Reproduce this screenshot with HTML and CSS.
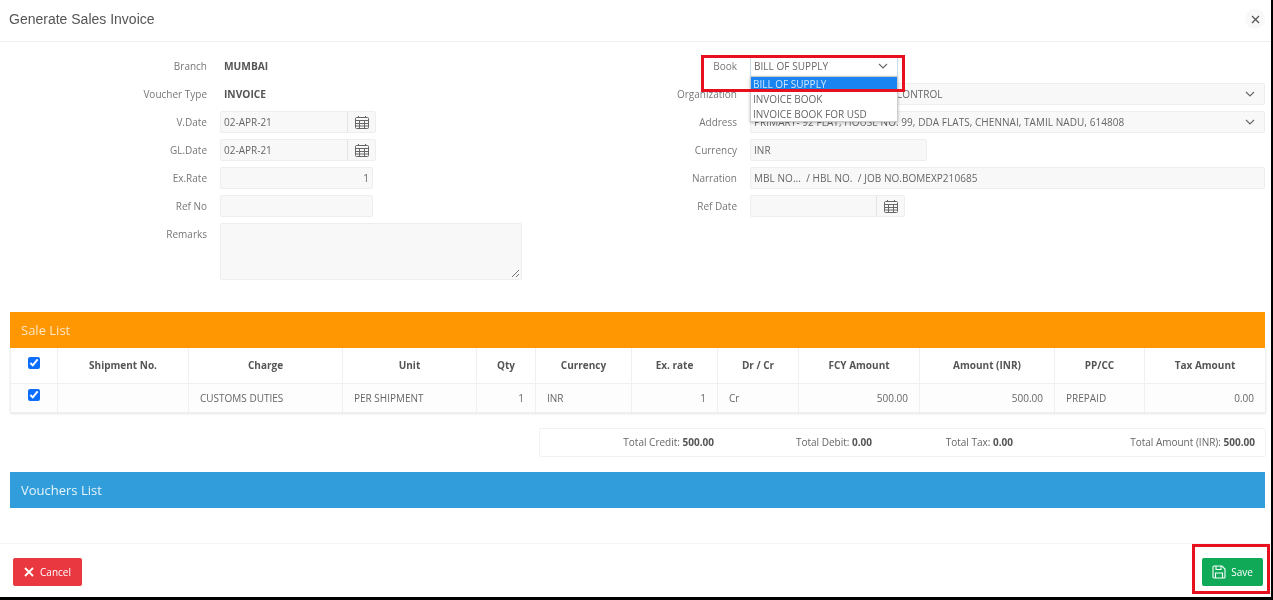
FILE: index.html
```html
<!DOCTYPE html>
<html lang="en">
<head>
    <meta charset="UTF-8">
    <title>Generate Sales Invoice</title>
    <link rel="stylesheet" href="styles.css">
</head>
<body>
    <div class="modal">
        <div class="modal-header">
            <h1>Generate Sales Invoice</h1>
            <button class="close" aria-label="Close">
                <svg width="9" height="9" viewBox="0 0 9 9"><path d="M1 1l7 7M8 1L1 8" stroke="#555" stroke-width="1.3" fill="none"/></svg>
            </button>
        </div>

        <div class="modal-body">
            <div class="form">
                <div class="form-col left">
                    <div class="row"><label>Branch</label><b class="value">MUMBAI</b></div>
                    <div class="row"><label>Voucher Type</label><b class="value">INVOICE</b></div>
                    <div class="row">
                        <label>V.Date</label>
                        <div class="field date">
                            <span class="text">02-APR-21</span>
                            <span class="cal"><svg width="14" height="13" viewBox="0 0 14 13"><path d="M3.5 0v2M10.5 0v2M1.5 1.5h11a1 1 0 0 1 1 1v9a1 1 0 0 1-1 1h-11a1 1 0 0 1-1-1v-9a1 1 0 0 1 1-1zM.5 4.5h13M.5 7.5h13M.5 10h13M4.500 4.500v8M9.500 4.500v8" stroke="#666" fill="none"/></svg></span>
                        </div>
                    </div>
                    <div class="row">
                        <label>GL.Date</label>
                        <div class="field date">
                            <span class="text">02-APR-21</span>
                            <span class="cal"><svg width="14" height="13" viewBox="0 0 14 13"><path d="M3.500 0v2M10.500 0v2M1.500 1.500h11a1 1 0 0 1 1 1v9a1 1 0 0 1-1 1h-11a1 1 0 0 1-1-1v-9a1 1 0 0 1 1-1zM.5 4.500h13M.5 7.500h13M.5 10h13M4.500 4.500v8M9.500 4.500v8" stroke="#666" fill="none"/></svg></span>
                        </div>
                    </div>
                    <div class="row"><label>Ex.Rate</label><div class="field short right"><span class="text">1</span></div></div>
                    <div class="row"><label>Ref No</label><div class="field short"></div></div>
                    <div class="row remarks-row">
                        <label>Remarks</label>
                        <div class="field remarks">
                            <svg class="grip" width="9" height="9" viewBox="0 0 9 9"><path d="M8 1L1 8M8 5L5 8" stroke="#777" fill="none"/></svg>
                        </div>
                    </div>
                </div>

                <div class="form-col right-col">
                    <div class="row book-row">
                        <label>Book</label>
                        <div class="field book">
                            <span class="text">BILL OF SUPPLY</span>
                            <svg class="chev" width="10" height="6" viewBox="0 0 10 6"><path d="M1 1l4 4 4-4" stroke="#666" stroke-width="1.1" fill="none"/></svg>
                            <div class="dropdown">
                                <div class="option selected">BILL OF SUPPLY</div>
                                <div class="option">INVOICE BOOK</div>
                                <div class="option">INVOICE BOOK FOR USD</div>
                            </div>
                        </div>
                        <div class="red-box book-box"></div>
                    </div>
                    <div class="row">
                        <label>Organization</label>
                        <div class="field wide">
                            <span class="text org-text">CONTROL</span>
                            <svg class="chev" width="10" height="6" viewBox="0 0 10 6"><path d="M1 1l4 4 4-4" stroke="#666" stroke-width="1.1" fill="none"/></svg>
                        </div>
                    </div>
                    <div class="row">
                        <label>Address</label>
                        <div class="field wide">
                            <span class="text">PRIMARY- 92 FLAT, HOUSE NO: 99, DDA FLATS, CHENNAI, TAMIL NADU, 614808</span>
                            <svg class="chev" width="10" height="6" viewBox="0 0 10 6"><path d="M1 1l4 4 4-4" stroke="#666" stroke-width="1.1" fill="none"/></svg>
                        </div>
                    </div>
                    <div class="row"><label>Currency</label><div class="field currency"><span class="text">INR</span></div></div>
                    <div class="row"><label>Narration</label><div class="field wide"><span class="text">MBL NO...  / HBL NO.  / JOB NO.BOMEXP210685</span></div></div>
                    <div class="row">
                        <label>Ref Date</label>
                        <div class="field ref-date">
                            <span class="text"></span>
                            <span class="cal"><svg width="14" height="13" viewBox="0 0 14 13"><path d="M3.500 0v2M10.500 0v2M1.500 1.500h11a1 1 0 0 1 1 1v9a1 1 0 0 1-1 1h-11a1 1 0 0 1-1-1v-9a1 1 0 0 1 1-1zM.5 4.500h13M.5 7.500h13M.5 10h13M4.500 4.500v8M9.500 4.500v8" stroke="#666" fill="none"/></svg></span>
                        </div>
                    </div>
                </div>
            </div>

            <div class="bar orange">Sale List</div>
            <table class="sale-table">
                <colgroup>
                    <col class="c-check"><col class="c-ship"><col class="c-charge"><col class="c-unit">
                    <col class="c-qty"><col class="c-cur"><col class="c-rate"><col class="c-drcr">
                    <col class="c-fcy"><col class="c-amt"><col class="c-pp"><col class="c-tax">
                </colgroup>
                <thead>
                    <tr>
                        <th><input type="checkbox" checked></th>
                        <th>Shipment No.</th>
                        <th>Charge</th>
                        <th>Unit</th>
                        <th>Qty</th>
                        <th>Currency</th>
                        <th>Ex. rate</th>
                        <th>Dr / Cr</th>
                        <th>FCY Amount</th>
                        <th>Amount (INR)</th>
                        <th>PP/CC</th>
                        <th>Tax Amount</th>
                    </tr>
                </thead>
                <tbody>
                    <tr>
                        <td class="center"><input type="checkbox" checked></td>
                        <td></td>
                        <td>CUSTOMS DUTIES</td>
                        <td>PER SHIPMENT</td>
                        <td class="num">1</td>
                        <td>INR</td>
                        <td class="num">1</td>
                        <td>Cr</td>
                        <td class="num">500.00</td>
                        <td class="num">500.00</td>
                        <td>PREPAID</td>
                        <td class="num">0.00</td>
                    </tr>
                </tbody>
            </table>

            <div class="totals">
                <div>Total Credit: <b>500.00</b></div>
                <div>Total Debit: <b>0.00</b></div>
                <div>Total Tax: <b>0.00</b></div>
                <div>Total Amount (INR): <b>500.00</b></div>
            </div>

            <div class="bar blue">Vouchers List</div>
        </div>

        <div class="modal-footer">
            <button class="btn cancel">
                <svg width="10" height="10" viewBox="0 0 10 10"><path d="M1 1l8 8M9 1L1 9" stroke="#fff" stroke-width="1.8" fill="none"/></svg>
                Cancel
            </button>
            <button class="btn save">
                <svg width="14" height="14" viewBox="0 0 14 14"><path d="M2 1h8l3 3v8a1 1 0 0 1-1 1H2a1 1 0 0 1-1-1V2a1 1 0 0 1 1-1zM4 1v3.500h5V1M3.500 13V8h7v5" stroke="#fff" stroke-width="1.1" fill="none"/></svg>
                Save
            </button>
            <div class="red-box save-box"></div>
        </div>
    </div>
</body>
</html>
```

FILE: styles.css
```css
* {
    box-sizing: border-box;
}

body {
    margin: 0;
    height: 600px;
    overflow: hidden;
    background-color: #000;
    font-family: "Open Sans", sans-serif;
    font-size: 10px;
    color: #666;
}

/* the reference is a soft, scaled up capture */
.modal {
    width: 1271px;
    height: 597px;
    background-color: #fff;
    display: flex;
    flex-direction: column;
    filter: blur(0.4px);
}

.modal-header {
    height: 42px;
    padding: 0 6px 3px 9px;
    border-bottom: 1px solid #eee;
    display: flex;
    align-items: center;
    justify-content: space-between;
}

.modal-header h1 {
    margin: 0;
    font-family: "Liberation Sans", sans-serif;
    font-size: 14px;
    font-weight: normal;
    color: #555;
}

.close {
    width: 20px;
    height: 20px;
    padding: 0;
    border: none;
    border-radius: 50%;
    background-color: #f8f8f8;
    display: flex;
    align-items: center;
    justify-content: center;
}

.modal-body {
    flex: 1;
    padding: 10px 6px 0 10px;
}

.form {
    display: flex;
    height: 260px;
}

.form-col.left {
    width: 631px;
}

.form-col.right-col {
    flex: 1;
}

.row {
    height: 28px;
    display: flex;
    align-items: center;
    gap: 13px;
    position: relative;
}

.remarks-row {
    height: auto;
    margin-top: 3px;
    align-items: flex-start;
}

.left label {
    width: 197px;
}

.right-col label {
    width: 97px;
}

label {
    text-align: right;
    color: #777;
}

.remarks-row label {
    padding-top: 4px;
}

.value {
    color: #555;
    margin-left: 4px;
    font-size: 10.2px;
}

.field {
    height: 22px;
    background-color: #f8f8f8;
    border: 1px solid #eee;
    border-radius: 2px;
    display: flex;
    align-items: center;
    position: relative;
}

.field .text {
    flex: 1;
    padding: 0 3px;
    white-space: pre;
}

.field .org-text {
    padding-left: 145px;
}

.right-col .text {
    letter-spacing: 0.05px;
}

.field.right .text {
    text-align: right;
}

.date {
    width: 156px;
}

.short {
    width: 153px;
}

.remarks {
    width: 302px;
    height: 57px;
}

.grip {
    position: absolute;
    right: 1px;
    bottom: 1px;
}

.cal {
    width: 28px;
    height: 100%;
    border-left: 1px solid #e4e4e4;
    display: flex;
    align-items: center;
    justify-content: center;
}

.wide {
    width: 515px;
}

.currency {
    width: 177px;
}

.ref-date {
    width: 155px;
}

.chev {
    margin-right: 9px;
    flex-shrink: 0;
}

.book {
    width: 148px;
    background-color: #fff;
    border-color: #c9dcec;
}

.dropdown {
    position: absolute;
    top: 20px;
    left: -1px;
    width: 148px;
    height: 46px;
    background-color: #fff;
    border: 1px solid #ccc;
    box-shadow: 0 1px 3px rgba(0, 0, 0, 0.25);
    z-index: 2;
}

.option {
    height: 15px;
    line-height: 15px;
    padding-left: 2px;
    white-space: nowrap;
}

.option.selected {
    background-color: #1a85f0;
    color: #cfe6ff;
}

.red-box {
    position: absolute;
    border: 3px solid #e8101e;
    z-index: 3;
}

.book-box {
    top: 3px;
    left: 61px;
    width: 204px;
    height: 37px;
}

.bar {
    height: 36px;
    line-height: 36px;
    padding-left: 11px;
    font-size: 13px;
    width: 1255px;
}

.orange {
    background-color: #ff9702;
    color: #ffe6c2;
}

.blue {
    margin-top: 15px;
    background-color: #319edb;
    color: #e6f4fc;
}

.sale-table {
    width: 1255px;
    table-layout: fixed;
    border-collapse: collapse;
    box-shadow: 0 1px 2px rgba(0, 0, 0, 0.1);
}

.c-check { width: 47px; }
.c-ship { width: 131px; }
.c-charge { width: 154px; }
.c-unit { width: 134px; }
.c-qty { width: 59px; }
.c-cur { width: 96px; }
.c-rate { width: 86px; }
.c-drcr { width: 81px; }
.c-fcy { width: 121px; }
.c-amt { width: 135px; }
.c-pp { width: 90px; }
.c-tax { width: 121px; }

.sale-table th,
.sale-table td {
    padding: 0 11px;
    border: 1px solid #f0f0f0;
    border-top: none;
    white-space: nowrap;
    overflow: hidden;
}

.sale-table th {
    height: 35px;
    color: #555;
    text-align: center;
}

.sale-table td {
    height: 29px;
    background-color: #fdfdfd;
}

.sale-table td.center {
    text-align: center;
}

.sale-table td.num {
    text-align: right;
}

.sale-table input {
    width: 12px;
    height: 12px;
    margin: 0;
    accent-color: #0d6efd;
    position: relative;
    top: -1px;
}

.sale-table th:first-child,
.sale-table td:first-child {
    padding: 0;
}

.totals {
    width: 727px;
    height: 29px;
    margin: 15px 0 0 529px;
    padding-right: 13px;
    border: 1px solid #f2f2f2;
    border-radius: 2px;
    display: grid;
    grid-template-columns: 174px 158px 141px 242px;
    align-items: center;
    text-align: right;
    white-space: nowrap;
}

.totals b {
    color: #555;
}

.modal-footer {
    height: 54px;
    padding: 14px 8px 0 13px;
    border-top: 1px solid #f4f4f4;
    display: flex;
    justify-content: space-between;
    position: relative;
}

.btn {
    height: 28px;
    border: none;
    border-radius: 2px;
    color: #fff;
    font-family: "Open Sans", sans-serif;
    font-size: 10px;
    display: flex;
    align-items: center;
    justify-content: center;
    gap: 5px;
}

.cancel {
    width: 69px;
    gap: 6px;
    background-color: #e9383f;
}

.save {
    width: 61px;
    background-color: #0fa958;
}

.save-box {
    top: 0;
    right: 1px;
    width: 78px;
    height: 50px;
}
```
